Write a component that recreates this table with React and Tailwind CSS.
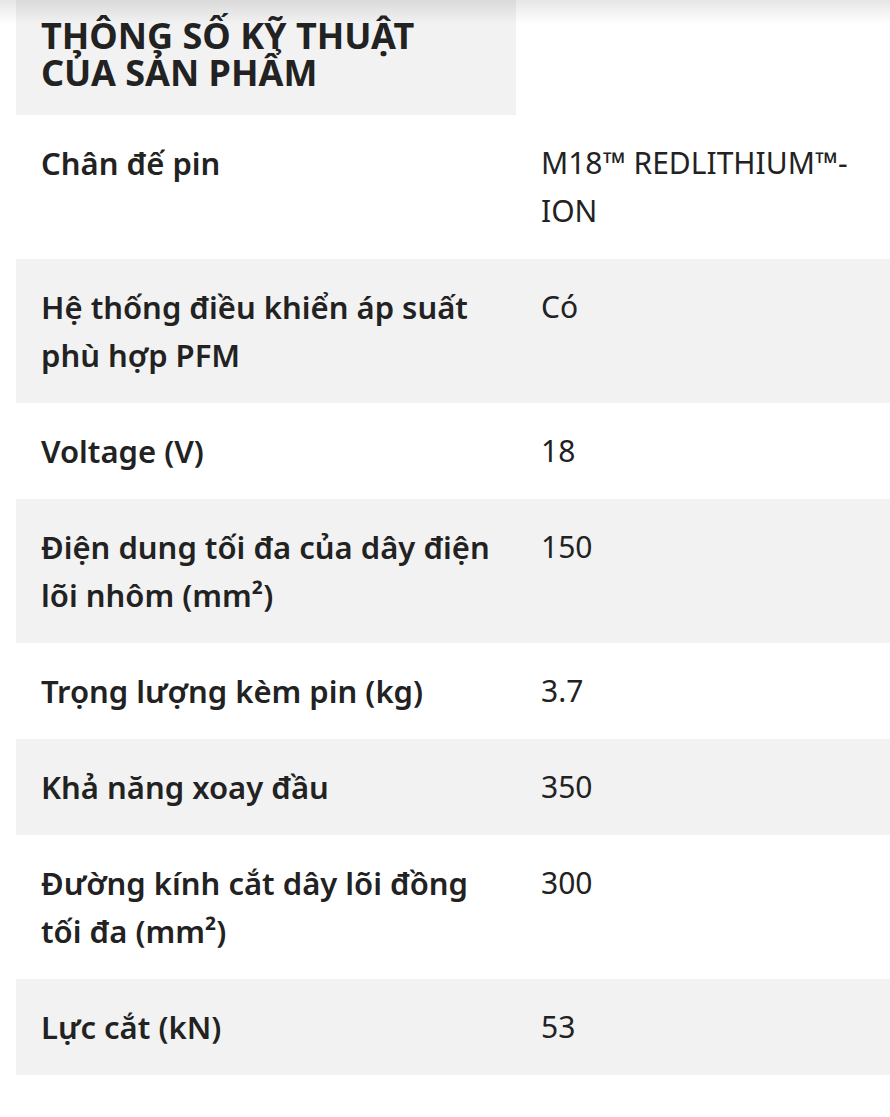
import React from 'react';

const specs = [
  ['Chân đế pin', 'M18™ REDLITHIUM™-ION'],
  ['Hệ thống điều khiển áp suất phù hợp PFM', 'Có'],
  ['Voltage (V)', '18'],
  ['Điện dung tối đa của dây điện lõi nhôm (mm²)', '150'],
  ['Trọng lượng kèm pin (kg)', '3.7'],
  ['Khả năng xoay đầu', '350'],
  ['Đường kính cắt dây lõi đồng tối đa (mm²)', '300'],
  ['Lực cắt (kN)', '53'],
];

export default function App() {
  return (
    <div className="relative min-h-[1117px] bg-white pl-4 text-[#222222] font-['Noto_Sans',sans-serif]">
      <div className="pointer-events-none absolute inset-x-0 top-0 h-6 bg-gradient-to-b from-black/10 to-transparent" />
      <div className="w-[500px] bg-[#f2f2f2] px-[25px] pt-[17px] pb-[24px]">
        <h2 className="max-w-[430px] text-[36px] font-bold uppercase leading-[37px]">
          Thông số kỹ thuật của sản phẩm
        </h2>
      </div>
      <div>
        {specs.map(([label, value], i) => (
          <div
            key={label}
            className={`grid grid-cols-[500px_1fr] leading-[48px] ${i % 2 === 1 ? 'bg-[#f2f2f2]' : 'bg-white'}`}
          >
            <div className="px-[25px] py-6 text-[31px] font-semibold">{label}</div>
            <div className="px-[25px] py-6 text-[30px]">{value}</div>
          </div>
        ))}
      </div>
    </div>
  );
}
